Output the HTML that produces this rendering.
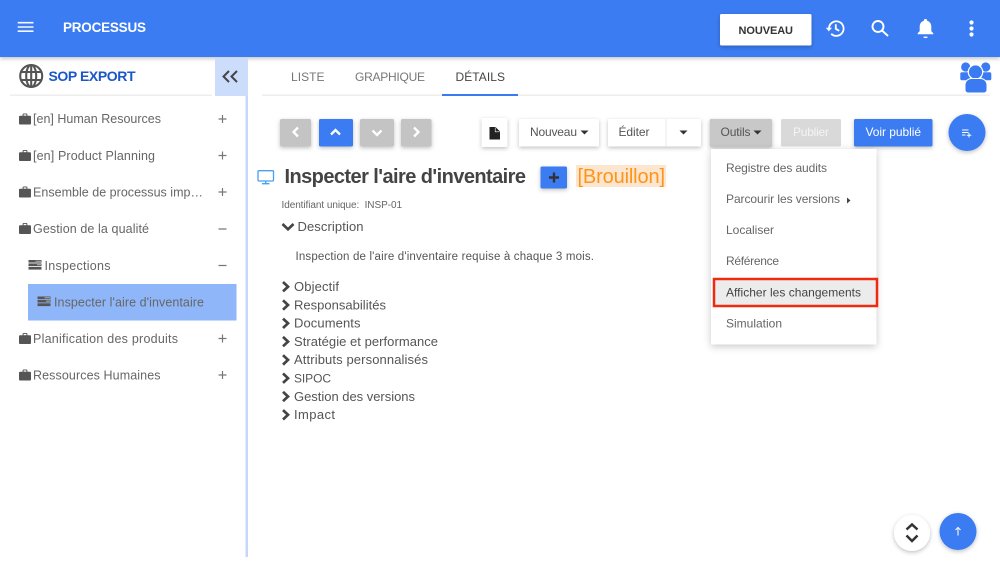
<!DOCTYPE html>
<html lang="fr"><head><meta charset="utf-8"><title>Processus</title>
<style>
html,body{margin:0;padding:0;background:#fff;width:1000px;height:561px;overflow:hidden}
svg{display:block}
text{font-family:"Liberation Sans",sans-serif;white-space:pre}
.s{font-size:12.5px;fill:#666}
.l{font-size:13px;fill:#555}
.m{font-size:12px;fill:#666}
.b{font-size:12px;fill:#555}
</style></head><body>
<svg width="1000" height="561" viewBox="0 0 1000 561" xmlns="http://www.w3.org/2000/svg">
<defs>
<filter id="sh" x="-30%" y="-30%" width="160%" height="170%"><feDropShadow dx="0" dy="1.5" stdDeviation="2" flood-color="#000" flood-opacity=".25"/></filter>
<filter id="sh2" x="-20%" y="-20%" width="140%" height="140%"><feDropShadow dx="0" dy="2" stdDeviation="4" flood-color="#000" flood-opacity=".22"/></filter>
<g id="case"><path d="M0 3.2a1 1 0 0 1 1-1h2.6V1a1 1 0 0 1 1-1h2.8a1 1 0 0 1 1 1v1.2H11a1 1 0 0 1 1 1V10a1 1 0 0 1-1 1H1a1 1 0 0 1-1-1z" fill="#555"/><rect x="4.6" y=".9" width="2.8" height="1.3" fill="#fff"/></g>
<g id="st" fill="#555"><rect x="0" y="0" width="13" height="2.6"/><rect x="0" y="3.4" width="13" height="2.6"/><rect x="0" y="6.8" width="13" height="2.8"/><rect x="7" y=".7" width="5.500" height="1.100" fill="#aaa"/><rect x="8.500" y="4.100" width="4" height="1.100" fill="#aaa"/></g>
<path id="chev" d="M0 0l5 4.700L0 9.400" fill="none" stroke="#444" stroke-width="2.700"/>
</defs>

<!-- header -->
<rect x="0" y="0" width="1000" height="57" fill="#3b7bf2" filter="url(#sh)"/>
<path d="M17.700 22.700h15.800M17.700 27h15.800M17.700 31.200h15.800" stroke="#fff" stroke-width="1.600" fill="none" opacity=".95"/>
<text x="63" y="32" font-size="13.500" font-weight="700" fill="#fff" textLength="83">PROCESSUS</text>
<rect x="720" y="14" width="91.500" height="31.500" rx="1.500" fill="#fff" filter="url(#sh)"/>
<text x="738.500" y="34" font-size="11" font-weight="700" fill="#333" textLength="54.500">NOUVEAU</text>
<!-- history -->
<g fill="none" stroke="#fff" stroke-width="1.800"><path d="M829 28.500a7.300 7.300 0 1 1 2.200 5.300"/><path d="M835.800 24.200v4.600l3.400 2"/></g>
<path d="M825.800 27.800h6.200l-3.100 3.600z" fill="#fff"/>
<!-- search -->
<g fill="none" stroke="#fff" stroke-width="1.900"><circle cx="878" cy="26.500" r="5.500"/><path d="M882 30.500l5.500 5" stroke-linecap="round"/></g>
<!-- bell -->
<path d="M925.500 19a1.600 1.600 0 0 1 1.600 1.700c2.800.8 4.200 3.100 4.200 6v4.400l2 2.200v1h-15.600v-1l2-2.200v-4.400c0-2.900 1.400-5.200 4.200-6a1.600 1.600 0 0 1 1.600-1.700z" fill="#fff"/>
<path d="M923.300 36.600h4.400a2.200 1.500 0 0 1-4.400 0z" fill="#fff"/>
<!-- dots -->
<g fill="#fff"><circle cx="971.500" cy="22.500" r="2.100"/><circle cx="971.500" cy="28.500" r="2.100"/><circle cx="971.500" cy="34.500" r="2.100"/></g>

<!-- sidebar -->
<g fill="none" stroke="#555" stroke-width="2.100"><circle cx="31.200" cy="76" r="11"/><ellipse cx="31.200" cy="76" rx="5" ry="11"/><path d="M21.500 72h19.500M21.500 80h19.500M31.200 65v22"/></g>
<text x="48.500" y="81" font-size="14" font-weight="700" fill="#1b57c6" textLength="87">SOP EXPORT</text>
<rect x="10" y="94.500" width="202" height="1.500" fill="#eee"/>
<rect x="215" y="58" width="33" height="38" fill="#ccdcfb"/>
<path d="M229 71l-5.500 5.500 5.500 5.500M237 71l-5.500 5.500 5.500 5.500" fill="none" stroke="#444" stroke-width="2"/>
<rect x="245.500" y="96" width="2.500" height="461" fill="#c5d8fa"/>

<use href="#case" x="19" y="113.500"/><text class="s" x="33" y="123" textLength="128">[en] Human Resources</text>
<use href="#case" x="19" y="150"/><text class="s" x="33" y="160" textLength="122">[en] Product Planning</text>
<use href="#case" x="19" y="186.500"/><text class="s" x="33" y="196.500" textLength="170">Ensemble de processus imp…</text>
<use href="#case" x="19" y="223"/><text class="s" x="33" y="233" textLength="116">Gestion de la qualité</text>
<use href="#st" x="28.500" y="260"/><text class="s" x="44.500" y="270" textLength="66">Inspections</text>
<rect x="28" y="284" width="208.500" height="36.500" fill="#8fb6f9"/>
<use href="#st" x="37.500" y="296.500"/><text class="s" x="54" y="306.500" textLength="150">Inspecter l'aire d'inventaire</text>
<use href="#case" x="19" y="333"/><text class="s" x="33" y="343" textLength="145">Planification des produits</text>
<use href="#case" x="19" y="369.500"/><text class="s" x="33" y="379.500" textLength="127.500">Ressources Humaines</text>
<g stroke="#777" stroke-width="1.200" fill="none">
<path d="M218.500 119h8M222.500 115v8M218.500 155.500h8M222.500 151.500v8M218.500 192h8M222.500 188v8M218.500 229h8M218.500 265.500h8M218.500 338.500h8M222.500 334.500v8M218.500 375h8M222.500 371v8"/>
</g>

<!-- tabs -->
<text x="291" y="81" font-size="12" fill="#777" textLength="33.500">LISTE</text>
<text x="355" y="81" font-size="12" fill="#777" textLength="70">GRAPHIQUE</text>
<text x="455.500" y="81" font-size="12" fill="#444" textLength="49.500">DÉTAILS</text>
<rect x="262" y="94.500" width="728" height="1.500" fill="#eee"/>
<rect x="442" y="94" width="76" height="2" fill="#3b7bf2"/>
<!-- users icon -->
<g fill="#3b7bf2">
<circle cx="965.700" cy="67" r="4.600"/><circle cx="985.700" cy="67" r="4.600"/>
<path d="M961.800 72.300h7l2 8h-9a1.500 1.500 0 0 1-1.500-1.500v-5a1.500 1.500 0 0 1 1.500-1.500zM989.800 72.300h-7l-2 8h9a1.500 1.500 0 0 0 1.500-1.500v-5a1.500 1.500 0 0 0-1.500-1.500z"/>
<circle cx="975.500" cy="72" r="7.200" stroke="#fff" stroke-width="1.200"/>
<path d="M968 93a3 3 0 0 1-3-3v-5a6.500 6.500 0 0 1 6.500-6.500h9a6.500 6.500 0 0 1 6.500 6.500v5a3 3 0 0 1-3 3z" stroke="#fff" stroke-width="1"/>
</g>

<!-- toolbar -->
<g filter="url(#sh)">
<rect x="280" y="119" width="31" height="27.500" rx="1.500" fill="#c4c4c4"/>
<rect x="319" y="119" width="34" height="27.500" rx="1.500" fill="#3b7bf2"/>
<rect x="360" y="119" width="34" height="27.500" rx="1.500" fill="#c4c4c4"/>
<rect x="401" y="119" width="30.500" height="27.500" rx="1.500" fill="#c4c4c4"/>
</g>
<g fill="none" stroke="#fff" stroke-width="2.300">
<path d="M298 127.500l-4.500 4.500 4.500 4.500"/>
<path d="M331 134.500l4.500-4.500 4.500 4.500"/>
<path d="M372.500 130.500l4.500 4.500 4.500-4.500"/>
<path d="M414 127.500l4.500 4.500-4.500 4.500"/>
</g>
<rect x="481.700" y="118" width="25.800" height="29" rx="1" fill="#fff" filter="url(#sh)"/>
<path d="M489.500 127h6l4.500 4.500v8h-10.500z" fill="#222"/><path d="M495.200 127.500v4.300h4.300" fill="none" stroke="#fff" stroke-width=".6"/>
<rect x="519" y="119" width="80" height="27.500" rx="1" fill="#fff" filter="url(#sh)"/>
<text class="b" x="530" y="136" textLength="47">Nouveau</text>
<path d="M580.500 130.500h8l-4 4z" fill="#333"/>
<rect x="608" y="119" width="93" height="27.500" rx="1" fill="#fff" filter="url(#sh)"/>
<rect x="665.500" y="119" width="1" height="27.500" fill="#e8e8e8"/>
<text class="b" x="618.500" y="136" textLength="31">Éditer</text>
<path d="M679.500 130.500h8l-4 4z" fill="#333"/>
<rect x="709.700" y="119" width="62.300" height="28" rx="1.500" fill="#c8c8c8" filter="url(#sh)"/>
<text class="b" x="720.500" y="136" textLength="30">Outils</text>
<path d="M753.500 130.500h8l-4 4z" fill="#333"/>
<rect x="781" y="119" width="60" height="27.500" rx="1.500" fill="#d9d9d9"/>
<text x="793" y="136" font-size="12" fill="#f4f4f4" textLength="36">Publier</text>
<rect x="854" y="119" width="78.500" height="27.500" rx="1.500" fill="#3b7bf2" filter="url(#sh)"/>
<text x="865.500" y="136" font-size="12" fill="#fff" textLength="55.500">Voir publié</text>
<circle cx="967" cy="132.500" r="18.500" fill="#3b7bf2" filter="url(#sh)"/>
<path d="M962 130h6.500M962 132.500h6.500M962 135h3.500M969 133v4.500M966.800 135.200h4.500" stroke="#fff" stroke-width="1" fill="none"/>

<!-- title -->
<g fill="none" stroke="#4a9ff2" stroke-width="1.300"><rect x="258" y="170.700" width="15.500" height="10.300" rx="1"/><path d="M262 183.700h7.500M265.700 181v2.700"/></g>
<text x="284.500" y="183" font-size="20" font-weight="700" fill="#444" textLength="241.500">Inspecter l'aire d'inventaire</text>
<rect x="540.500" y="166.500" width="26.500" height="22" rx="1.500" fill="#3b7bf2" filter="url(#sh)"/>
<path d="M549 177.500h10M554 172.500v10" stroke="#333" stroke-width="2.400" fill="none"/>
<rect x="576" y="165" width="90" height="22" fill="#fde6d0"/>
<text x="577.500" y="183" font-size="20" fill="#ff9419" textLength="87.500">[Brouillon]</text>
<text x="281.500" y="208" font-size="10" fill="#666" textLength="120.500">Identifiant unique:  INSP-01</text>

<path d="M282.500 224l5.500 5.300 5.500-5.300" fill="none" stroke="#444" stroke-width="2.700"/>
<text class="l" x="297.500" y="231" textLength="66">Description</text>
<text x="295.500" y="260" font-size="11.500" fill="#555" textLength="298.500">Inspection de l'aire d'inventaire requise à chaque 3 mois.</text>

<use href="#chev" x="283" y="282"/><text class="l" x="294" y="291" textLength="45">Objectif</text>
<use href="#chev" x="283" y="300.300"/><text class="l" x="294" y="309.300" textLength="92">Responsabilités</text>
<use href="#chev" x="283" y="318.600"/><text class="l" x="294" y="327.600" textLength="66.500">Documents</text>
<use href="#chev" x="283" y="336.900"/><text class="l" x="294" y="345.900" textLength="144">Stratégie et performance</text>
<use href="#chev" x="283" y="355.200"/><text class="l" x="294" y="364.200" textLength="134">Attributs personnalisés</text>
<use href="#chev" x="283" y="373.500"/><text class="l" x="294" y="382.500" font-size="12" style="font-size:12px" textLength="37">SIPOC</text>
<use href="#chev" x="283" y="391.800"/><text class="l" x="294" y="400.800" textLength="121">Gestion des versions</text>
<use href="#chev" x="283" y="410.100"/><text class="l" x="294" y="419.100" textLength="41">Impact</text>

<!-- dropdown -->
<rect x="711" y="149" width="165.500" height="195.500" fill="#fff" filter="url(#sh2)"/>
<text class="m" x="726" y="172" textLength="101">Registre des audits</text>
<text class="m" x="726" y="203" textLength="114">Parcourir les versions</text>
<path d="M847 197.500l3.500 3-3.500 3z" fill="#444"/>
<text class="m" x="726" y="234" textLength="48">Localiser</text>
<text class="m" x="726" y="265" textLength="53">Référence</text>
<rect x="714" y="279" width="163" height="27" fill="#ececec" stroke="#f02a10" stroke-width="2.500"/>
<text x="726" y="296.500" font-size="12" fill="#444" textLength="135">Afficher les changements</text>
<text class="m" x="726" y="327.500" textLength="56">Simulation</text>

<!-- bottom buttons -->
<circle cx="912" cy="533" r="18" fill="#fff" filter="url(#sh)"/>
<path d="M906.500 529.500l5.500-5 5.500 5M906.500 535.500l5.500 5.500 5.500-5.500" fill="none" stroke="#333" stroke-width="2.500"/>
<circle cx="958" cy="531.500" r="18.500" fill="#3b7bf2" filter="url(#sh)"/>
<path d="M958 535.500v-7.500M955.500 530l2.500-2.500 2.500 2.500" fill="none" stroke="#e8f0ff" stroke-width="1.200"/>
</svg>
</body></html>
